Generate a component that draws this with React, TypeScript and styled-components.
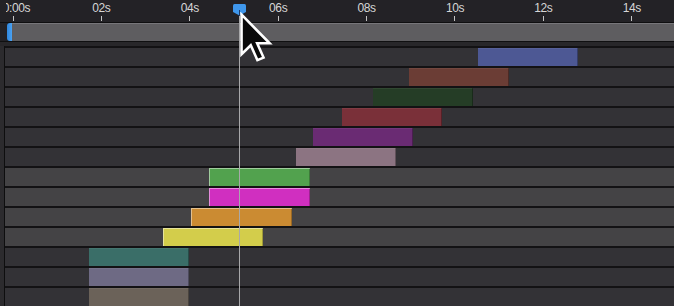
import styled, { createGlobalStyle } from "styled-components";

const GlobalStyle = createGlobalStyle`
    html, body {
        margin: 0;
        padding: 0;
        background: #232226;
    }
    body {
        font-family: "Liberation Sans", Arial, sans-serif;
    }
`;

const PX_PER_2S = 88.4;

const LABELS = ["0:00s", "02s", "04s", "06s", "08s", "10s", "12s", "14s"];

type Clip = { x: number; w: number; color: string };

// x is page position of the clip's left edge
const LAYERS: { light?: boolean; clip: Clip }[] = [
    { clip: { x: 478, w: 100, color: "#4d5894" } },
    { clip: { x: 409, w: 100, color: "#6b3d35" } },
    { clip: { x: 373, w: 100, color: "#253d26" } },
    { clip: { x: 342, w: 100, color: "#7a3039" } },
    { clip: { x: 313, w: 100, color: "#6a2b73" } },
    { clip: { x: 296, w: 100, color: "#8c7482" } },
    { light: true, clip: { x: 209, w: 101, color: "#52a24e" } },
    { light: true, clip: { x: 209, w: 101, color: "#d02fc0" } },
    { light: true, clip: { x: 191, w: 101, color: "#cb8b32" } },
    { light: true, clip: { x: 163, w: 100, color: "#d3cd4b" } },
    { clip: { x: 89, w: 100, color: "#3a6e68" } },
    { clip: { x: 89, w: 100, color: "#6e6a84" } },
    { clip: { x: 89, w: 100, color: "#6b6259" } },
];

const Stage = styled.div`
    position: relative;
    width: 674px;
    height: 306px;
    overflow: hidden;
    background: #232226;
    display: flex;
    flex-direction: column;
`;

const Ruler = styled.div`
    height: 22px;
    flex-shrink: 0;
    padding-left: 6px;
    background: #232226;
    display: flex;
`;

const RulerInner = styled.div`
    flex: 1;
    overflow: hidden;
    display: flex;
`;

const TickCell = styled.div<{ $first?: boolean }>`
    flex: 0 0 ${PX_PER_2S}px;
    margin-left: ${(p) => (p.$first ? "-37.2px" : "0")};
    display: flex;
    flex-direction: column;
    align-items: center;
`;

const TickLabel = styled.span<{ $shift?: number }>`
    margin-top: 2px;
    font-size: 12px;
    line-height: 13px;
    letter-spacing: -0.4px;
    color: #d6d6d6;
    transform: translateX(${(p) => p.$shift || 0}px);
    white-space: nowrap;
`;

const TickMark = styled.div`
    margin-top: 1px;
    width: 1px;
    height: 5px;
    background: #c4c4c4;
`;

const ScrollRow = styled.div`
    height: 19px;
    flex-shrink: 0;
    box-sizing: border-box;
    border-top: 1px solid #0f0f10;
    display: flex;
    background: #232226;
`;

const ScrollLead = styled.div`
    width: 7px;
`;

const ScrollThumb = styled.div`
    width: 5px;
    border-radius: 3px 0 0 3px;
    background: linear-gradient(90deg, #2f86de, #4aa2f2);
`;

const ScrollTrack = styled.div`
    flex: 1;
    background: #5e5d60;
    box-shadow: inset 0 1px 0 #77767a;
`;

const Gap = styled.div`
    height: 4px;
    flex-shrink: 0;
    border-top: 1px solid #101011;
    background: #28272a;
`;

const Layers = styled.div`
    flex: 1;
    display: flex;
`;

const Gutter = styled.div`
    width: 4px;
    flex-shrink: 0;
    background: #2c2b2e;
    border-right: 1px solid #0e0e0f;
`;

const Tracks = styled.div`
    flex: 1;
    display: flex;
    flex-direction: column;
`;

const Track = styled.div<{ $light?: boolean }>`
    height: 20px;
    flex-shrink: 0;
    box-sizing: border-box;
    border-top: 2px solid #131214;
    background: ${(p) => (p.$light ? "#444345" : "#333236")};
    display: flex;
`;

const ClipBar = styled.div<{ $x: number; $w: number; $color: string; $light?: boolean }>`
    margin-left: ${(p) => p.$x - 5}px;
    width: ${(p) => p.$w}px;
    height: 100%;
    background: ${(p) => p.$color};
    box-shadow: ${(p) =>
        p.$light
            ? "inset 1px 1px 0 rgba(255,255,255,0.45), inset -1px 0 0 rgba(0,0,0,0.25)"
            : "inset -1px 0 0 rgba(0,0,0,0.3), inset 0 1px 0 rgba(255,255,255,0.06)"};
`;

const PlayheadLine = styled.div`
    position: absolute;
    left: 239px;
    top: 12px;
    bottom: 0;
    width: 1px;
    background: #a8a8aa;
`;

const PlayheadHandle = styled.svg`
    position: absolute;
    left: 233px;
    top: 4px;
`;

const Pointer = styled.svg`
    position: absolute;
    left: 239px;
    top: 12px;
`;

export default function App() {
    return (
        <>
            <GlobalStyle />
            <Stage>
                <Ruler>
                    <RulerInner>
                        {LABELS.map((l, i) => (
                            <TickCell key={l} $first={i === 0}>
                                <TickLabel $shift={i === 0 ? 3.5 : 0}>{l}</TickLabel>
                                <TickMark />
                            </TickCell>
                        ))}
                    </RulerInner>
                </Ruler>
                <ScrollRow>
                    <ScrollLead />
                    <ScrollThumb />
                    <ScrollTrack />
                </ScrollRow>
                <Gap />
                <Layers>
                    <Gutter />
                    <Tracks>
                        {LAYERS.map((layer, i) => (
                            <Track key={i} $light={layer.light}>
                                <ClipBar
                                    $x={layer.clip.x}
                                    $w={layer.clip.w}
                                    $color={layer.clip.color}
                                    $light={layer.light}
                                />
                            </Track>
                        ))}
                    </Tracks>
                </Layers>

                <PlayheadLine />
                <PlayheadHandle width="13" height="12" viewBox="0 0 13 12">
                    <path d="M1.5 0 H11.5 Q13 0 13 1.5 V8 L6.5 11.5 L0 8 V1.5 Q0 0 1.5 0 Z" fill="#3f97ec" />
                    <rect x="6" y="6" width="1" height="6" fill="#1c3a66" />
                </PlayheadHandle>
                <Pointer width="34" height="50" viewBox="0 0 13.3 19.5">
                    <path
                        d="M1 1 L1 16.5 L4.6 13 L7.2 18.8 L9.6 17.8 L7.1 12.2 L12 12.2 Z"
                        fill="#0a0a0a"
                        stroke="#ffffff"
                        strokeWidth="1"
                        strokeLinejoin="miter"
                    />
                </Pointer>
            </Stage>
        </>
    );
}
